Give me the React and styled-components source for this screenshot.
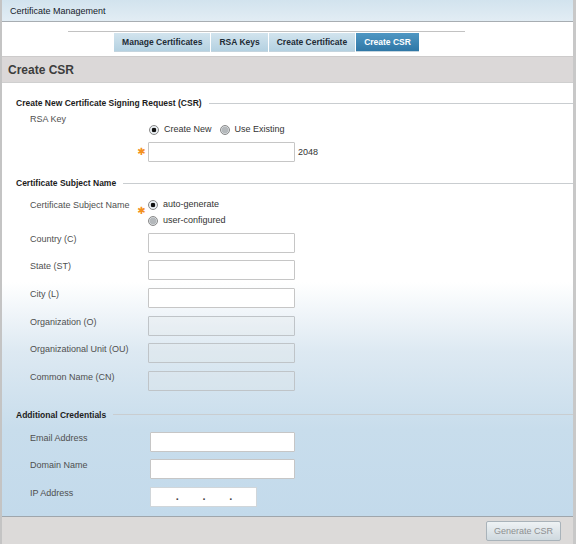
import styled, { createGlobalStyle } from 'styled-components'

const GlobalStyle = createGlobalStyle`
  html, body {
    margin: 0;
    padding: 0;
    background: #fff;
  }
  body {
    font-family: "Liberation Sans", Arial, sans-serif;
  }
`

const TABS = ['Manage Certificates', 'RSA Keys', 'Create Certificate', 'Create CSR']

const Radio = ({ checked, label }) => (
  <RadioItem>
    <RadioDot $checked={checked} />
    <span>{label}</span>
  </RadioItem>
)

const App = () => {
  return (
    <>
      <GlobalStyle />
      <Frame>
        <Header>Certificate Management</Header>
        <TabArea>
          <TabBar>
            {TABS.map((t) => (
              <Tab key={t} $active={t === 'Create CSR'}>{t}</Tab>
            ))}
          </TabBar>
        </TabArea>
        <PageTitle>Create CSR</PageTitle>
        <Body>
          <Section $top={15}>
            <SectionTitle>Create New Certificate Signing Request (CSR)</SectionTitle>
            <SectionLine />
          </Section>
          <Grid $top={5}>
            <Label>RSA Key</Label>
            <span />
            <RadioRow>
              <Radio checked label="Create New" />
              <Radio label="Use Existing" />
            </RadioRow>
            <span />
            <Star>✱</Star>
            <Control>
              <Input $w={147} />
              <Suffix>2048</Suffix>
            </Control>
          </Grid>

          <Section $top={16}>
            <SectionTitle>Certificate Subject Name</SectionTitle>
            <SectionLine />
          </Section>
          <Grid $top={11} $gap={7.7}>
            <Label>Certificate Subject Name</Label>
            <Star $top={7}>✱</Star>
            <RadioStack>
              <Radio checked label="auto-generate" />
              <Radio label="user-configured" />
            </RadioStack>
            {['Country (C)', 'State (ST)', 'City (L)'].map((l) => (
              <Row key={l}>
                <Label>{l}</Label>
                <span />
                <Input $w={147} />
              </Row>
            ))}
            {['Organization (O)', 'Organizational Unit (OU)', 'Common Name (CN)'].map((l) => (
              <Row key={l}>
                <Label>{l}</Label>
                <span />
                <Input $w={147} $disabled />
              </Row>
            ))}
          </Grid>

          <Section $top={18.5}>
            <SectionTitle>Additional Credentials</SectionTitle>
            <SectionLine />
          </Section>
          <Grid $top={12} $gap={7.6} $shift={2}>
            <Row>
              <Label>Email Address</Label>
              <span />
              <Input $w={145} />
            </Row>
            <Row>
              <Label>Domain Name</Label>
              <span />
              <Input $w={145} />
            </Row>
            <Row>
              <Label>IP Address</Label>
              <span />
              <IpInput>
                <IpPart />
                <IpDot>.</IpDot>
                <IpPart />
                <IpDot>.</IpDot>
                <IpPart />
                <IpDot>.</IpDot>
                <IpPart />
              </IpInput>
            </Row>
          </Grid>
        </Body>
        <Footer>
          <Button disabled>Generate CSR</Button>
        </Footer>
      </Frame>
    </>
  )
}
export default App

const Frame = styled.div`
  width: 576px;
  height: 544px;
  box-sizing: border-box;
  border-left: 2px solid #c4c4c4;
  border-right: 3px solid #c8c8c8;
  display: flex;
  flex-direction: column;
  overflow: hidden;
`
const Header = styled.div`
  height: 22px;
  box-sizing: border-box;
  padding: 0 8px;
  display: flex;
  align-items: center;
  background: linear-gradient(180deg, #d2e3ee 0%, #e2edf4 100%);
  border-bottom: 1px solid #a7adb2;
  font-size: 9px;
  color: #16212a;
  flex: none;
`
const TabArea = styled.div`
  height: 34px;
  background: #fff;
  padding-top: 9px;
  box-sizing: border-box;
  flex: none;
`
const TabBar = styled.div`
  width: 397px;
  margin-left: 66px;
  border-top: 1px solid #c2c2c2;
  padding-top: 1px;
  display: flex;
  justify-content: center;
  gap: 1px;
`
const Tab = styled.div`
  height: 18px;
  padding: 0 8px;
  display: flex;
  align-items: center;
  font-size: 8.5px;
  font-weight: bold;
  color: ${(p) => (p.$active ? '#fff' : '#1d2b35')};
  background: ${(p) =>
    p.$active
      ? 'linear-gradient(180deg, #4f97c3 0%, #2f77a6 100%)'
      : 'linear-gradient(180deg, #d2e4ee 0%, #b4d1e1 100%)'};
  box-shadow: 0 1px 0 #c4d4de;
`
const PageTitle = styled.div`
  height: 27px;
  box-sizing: border-box;
  padding: 0 6px;
  display: flex;
  align-items: center;
  background: #dbd8d8;
  border-top: 1px solid #cdcbcb;
  border-bottom: 1px solid #cfcfcf;
  font-size: 12px;
  font-weight: bold;
  color: #3d3d3d;
  flex: none;
`
const Body = styled.div`
  flex: 1;
  padding-left: 14px;
  background: linear-gradient(180deg, #ffffff 0%, #ffffff 46%, #dde9f2 62%, #c8ddec 80%, #c3daeb 100%);
`
const Section = styled.div`
  display: flex;
  align-items: center;
  margin-top: ${(p) => p.$top}px;
`
const SectionTitle = styled.div`
  font-size: 8.5px;
  font-weight: bold;
  color: #1c1c1c;
  white-space: nowrap;
`
const SectionLine = styled.div`
  flex: 1;
  margin-left: 7px;
  border-top: 1px solid #c9cdd0;
`
const Grid = styled.div`
  display: grid;
  grid-template-columns: ${(p) => 122 + (p.$shift || 0)}px 10px 1fr;
  row-gap: ${(p) => p.$gap || 0}px;
  margin-top: ${(p) => p.$top}px;
  align-items: start;
`
const Row = styled.div`
  display: contents;
`
const Label = styled.div`
  padding-left: 14px;
  padding-top: 1px;
  font-size: 9px;
  color: #4f4f4f;
  line-height: 11px;
`
const Star = styled.div`
  color: #f39020;
  font-family: "DejaVu Sans", sans-serif;
  font-size: 10px;
  line-height: ${(p) => (p.$top ? '10px' : '20px')};
  margin-top: ${(p) => p.$top || 0}px;
  text-align: center;
  margin-left: -3px;
`
const RadioRow = styled.div`
  display: flex;
  gap: 8px;
  margin-top: 11px;
  margin-left: 1px;
  margin-bottom: 7px;
`
const RadioStack = styled.div`
  display: flex;
  flex-direction: column;
  gap: 5px;
  margin-left: 0;
  margin-bottom: -1px;
`
const RadioItem = styled.label`
  display: flex;
  align-items: center;
  gap: 5px;
  font-size: 9px;
  color: #333;
  line-height: 11px;
`
const RadioDot = styled.span`
  width: 10px;
  height: 10px;
  box-sizing: border-box;
  border-radius: 50%;
  border: 1px solid #888;
  display: inline-flex;
  background: ${(p) =>
    p.$checked
      ? 'radial-gradient(circle, #111 0 2px, #e9eef2 2.6px)'
      : 'radial-gradient(circle, #b4b8bb 0 3px, #d8dcdf 3.6px)'};
`
const Control = styled.div`
  display: flex;
  align-items: center;
  gap: 3px;
`
const Input = styled.div`
  width: ${(p) => p.$w}px;
  height: 20px;
  box-sizing: border-box;
  border: 1px solid ${(p) => (p.$disabled ? '#bfc4c8' : '#c6c6c6')};
  border-radius: 1px;
  background: ${(p) => (p.$disabled ? 'rgba(228, 230, 232, 0.25)' : '#fff')};
`
const Suffix = styled.span`
  font-size: 9px;
  color: #333;
`
const IpInput = styled.div`
  width: 107px;
  height: 20px;
  box-sizing: border-box;
  border: 1px solid #d0d6da;
  background: #fff;
  display: flex;
  align-items: center;
`
const IpPart = styled.span`
  flex: 1;
`
const IpDot = styled.span`
  width: 2px;
  font-size: 11px;
  font-weight: bold;
  color: #444;
  line-height: 11px;
  text-align: center;
`
const Footer = styled.div`
  height: 28px;
  box-sizing: border-box;
  border-top: 1px solid #9fa6ac;
  background: #dcdad9;
  display: flex;
  align-items: center;
  justify-content: flex-end;
  padding-right: 12px;
  flex: none;
`
const Button = styled.button`
  width: 75px;
  height: 20px;
  padding: 0;
  font-family: "Liberation Sans", Arial, sans-serif;
  font-size: 9px;
  color: #8d8f91;
  border: 1px solid #a9b3ba;
  border-radius: 2px;
  background: linear-gradient(180deg, #eef2f4 0%, #cfd9df 100%);
`
